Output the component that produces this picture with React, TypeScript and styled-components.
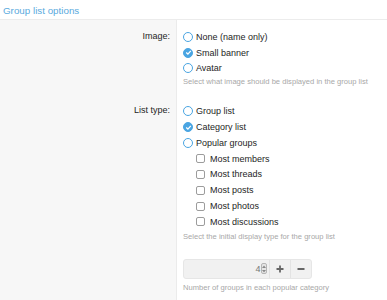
import React from "react";
import styled, { createGlobalStyle } from "styled-components";

const Global = createGlobalStyle`
  html, body { margin: 0; padding: 0; background: #fff; }
  body { font-family: "Liberation Sans", Arial, sans-serif; color: #141414; }
`;

const Page = styled.div`
  width: 387px;
  height: 300px;
  overflow: hidden;
`;

const Title = styled.h2`
  margin: 0;
  height: 20px;
  padding: 5px 0 0 3px;
  box-sizing: border-box;
  font-size: 9.8px;
  line-height: 12px;
  font-weight: normal;
  color: #5aaade;
  border-bottom: 1px solid #ececec;
`;

const Row = styled.div`
  display: grid;
  grid-template-columns: 177px 1fr;
`;

const Label = styled.div<{ $top: number }>`
  background: #f7f7f7;
  border-right: 1px solid #ebebeb;
  text-align: right;
  padding: ${(p) => p.$top}px 6px 0 0;
  font-size: 9px;
  line-height: 15.8px;
  color: #1e1e1e;
`;

const Field = styled.div<{ $top: number; $bottom: number }>`
  padding: ${(p) => p.$top}px 0 ${(p) => p.$bottom}px 6px;
  display: flex;
  flex-direction: column;
`;

const Option = styled.label<{ $indent?: boolean }>`
  display: flex;
  align-items: center;
  height: 15.8px;
  font-size: 9px;
  color: #1e1e1e;
  padding-left: ${(p) => (p.$indent ? 13 : 0)}px;
`;

const Radio = styled.span<{ $checked?: boolean }>`
  width: 10px;
  height: 10px;
  border-radius: 50%;
  box-sizing: border-box;
  border: 1.5px solid #4aa5e2;
  background: ${(p) => (p.$checked ? "#4aa5e2" : "#fff")};
  margin-right: 3px;
  display: flex;
  align-items: center;
  justify-content: center;
  flex: none;
`;

const Check = styled.span`
  width: 9px;
  height: 9px;
  border-radius: 2px;
  box-sizing: border-box;
  border: 1px solid #9c9c9c;
  background: #fff;
  margin-right: 5px;
  flex: none;
`;

const Hint = styled.div<{ $top: number }>`
  font-size: 7.6px;
  line-height: 9px;
  color: #a8a8a8;
  margin-top: ${(p) => p.$top}px;
  white-space: nowrap;
`;

const InputGroup = styled.div`
  display: flex;
  width: 129px;
  height: 20px;
  margin-top: 18px;
  border: 1px solid #e6e6e6;
  border-radius: 3px;
  background: #f1f1f1;
  box-sizing: border-box;
  overflow: hidden;
`;

const NumBox = styled.div`
  flex: 1;
  display: flex;
  align-items: center;
  justify-content: flex-end;
  padding-right: 2px;
  font-size: 9px;
  color: #777;
`;

const Spinner = styled.span`
  display: flex;
  flex-direction: column;
  justify-content: space-around;
  align-items: center;
  margin-left: 0.5px;
  width: 6px;
  height: 11px;
  border: 1px solid #b5b5b5;
  border-radius: 2px;
  box-sizing: border-box;
  background: #e6e6e6;
`;

const Btn = styled.div`
  width: 20px;
  display: flex;
  align-items: center;
  justify-content: center;
  border-left: 1px solid #e3e3e3;
  flex: none;
`;

const Tick = () => (
  <svg width="7" height="7" viewBox="0 0 7 7">
    <path d="M1.2 3.6 L2.9 5.1 L5.8 1.9" fill="none" stroke="#fff" strokeWidth="1.3" />
  </svg>
);

const Arrow = ({ up }: { up?: boolean }) => (
  <svg width="4" height="3" viewBox="0 0 4 3">
    <path d={up ? "M0 3 L2 0.5 L4 3Z" : "M0 0 L2 2.5 L4 0Z"} fill="#888" />
  </svg>
);

const Plus = () => (
  <svg width="8" height="8" viewBox="0 0 8 8">
    <path d="M4 0.5 V7.5 M0.5 4 H7.5" stroke="#666" strokeWidth="1.8" />
  </svg>
);

const Minus = () => (
  <svg width="8" height="8" viewBox="0 0 8 8">
    <path d="M0.5 4 H7.5" stroke="#666" strokeWidth="1.8" />
  </svg>
);

export default function App() {
  return (
    <Page>
      <Global />
      <Title>Group list options</Title>
      <Row>
        <Label $top={9}>Image:</Label>
        <Field $top={9} $bottom={7}>
          <Option><Radio />None (name only)</Option>
          <Option><Radio $checked><Tick /></Radio>Small banner</Option>
          <Option><Radio />Avatar</Option>
          <Hint $top={1}>Select what image should be displayed in the group list</Hint>
        </Field>
      </Row>
      <Row>
        <Label $top={10}>List type:</Label>
        <Field $top={10} $bottom={10}>
          <Option><Radio />Group list</Option>
          <Option><Radio $checked><Tick /></Radio>Category list</Option>
          <Option><Radio />Popular groups</Option>
          <Option $indent><Check />Most members</Option>
          <Option $indent><Check />Most threads</Option>
          <Option $indent><Check />Most posts</Option>
          <Option $indent><Check />Most photos</Option>
          <Option $indent><Check />Most discussions</Option>
          <Hint $top={2}>Select the initial display type for the group list</Hint>
          <InputGroup>
            <NumBox>4<Spinner><Arrow up /><Arrow /></Spinner></NumBox>
            <Btn><Plus /></Btn>
            <Btn><Minus /></Btn>
          </InputGroup>
          <Hint $top={4}>Number of groups in each popular category</Hint>
        </Field>
      </Row>
    </Page>
  );
}
